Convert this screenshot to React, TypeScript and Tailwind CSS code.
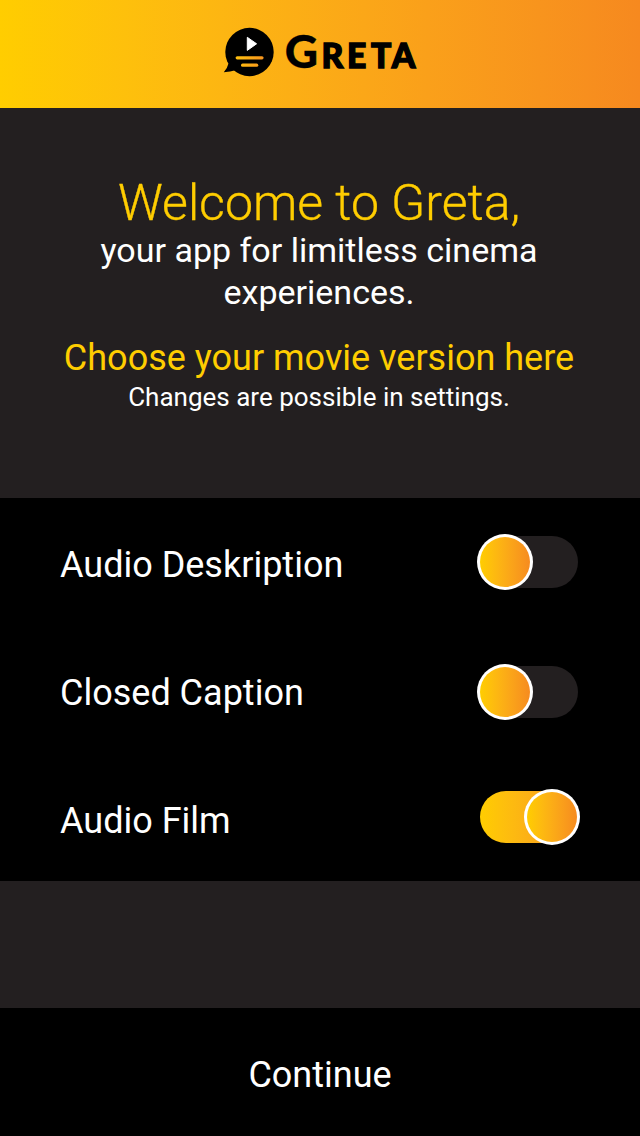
function Logo() {
  return (
    <svg width="200" height="56" viewBox="220 24 200 56" role="img" aria-label="Greta">
      <defs>
        <linearGradient id="bars" x1="235" x2="264" y1="0" y2="0" gradientUnits="userSpaceOnUse">
          <stop offset="0%" stopColor="#ffc20e" />
          <stop offset="100%" stopColor="#f7941e" />
        </linearGradient>
      </defs>
      <circle cx="249.5" cy="52" r="24.2" />
      <path d="M228.5 63.5 Q227.5 68 223.8 72.2 Q230 72 236.5 70 Z" />
      <path d="M247.3 37.3 L256.6 43.8 L247.3 50.4 Z" fill="#fff" stroke="#fff" strokeWidth="1" strokeLinejoin="round" />
      <rect x="235.6" y="56.2" width="28" height="3.2" rx="1.6" fill="url(#bars)" />
      <rect x="241" y="63.6" width="17.3" height="3.2" rx="1.6" fill="url(#bars)" />
      <g className="font-[Lato,sans-serif] font-black" stroke="#000">
        <text x="284.8" y="68" fontSize="46" strokeWidth="0.3">G</text>
        <text x="321.6 347 371 391.8" y="67.5" fontSize="33.6" strokeWidth="1.4">RETA</text>
      </g>
    </svg>
  );
}

function Toggle({ on }: { on?: boolean }) {
  return (
    <div className={on ? "relative w-[98px] h-[52px] rounded-full bg-linear-to-r from-[#ffcd00] to-[#f7931e]" : "relative w-[98px] h-[52px] rounded-full bg-[#231f20]"}>
      <div className={on ? "absolute -top-[2px] -right-[2px] size-[56px] rounded-full bg-white p-[3px]" : "absolute -top-[2px] -left-[3px] size-[56px] rounded-full bg-white p-[3px]"}>
        <div className="size-full rounded-full bg-linear-to-r from-[#ffcd00] to-[#f68b1f]" />
      </div>
    </div>
  );
}

export default function App() {
  return (
    <div className="w-[640px] h-[1136px] flex flex-col bg-[#231f20] text-white font-[Roboto,sans-serif]">
      <header className="h-[108px] flex justify-center pt-6 bg-linear-to-r from-[#ffcd00] to-[#f6891f]">
        <Logo />
      </header>
      <main className="h-[390px] pt-[67px] pr-[2px] text-center">
        <h1 className="text-[50px] leading-[56px] font-light text-[#ffcd00] [-webkit-text-stroke:0.35px_#ffcd00]">Welcome to Greta,</h1>
        <p className="-mt-[2px] text-[34px] leading-[42px]">your app for limitless cinema<br />experiences.</p>
        <h2 className="mt-[23px] text-[36px] leading-[44px] text-[#ffcd00]">Choose your movie version here</h2>
        <p className="text-[26px] leading-[34px]">Changes are possible in settings.</p>
      </main>
      <section className="h-[383px] bg-black pl-[60px] pr-[62px] text-[36px]">
        <div className="h-[128px] flex justify-between items-center">
          <span className="pt-1.5">Audio Deskription</span>
          <Toggle />
        </div>
        <div className="h-[128px] flex justify-between items-center">
          <span className="pt-1.5">Closed Caption</span>
          <div className="pt-1"><Toggle /></div>
        </div>
        <div className="h-[127px] flex justify-between items-center">
          <span className="pt-1.5">Audio Film</span>
          <div className="pb-px"><Toggle on /></div>
        </div>
      </section>
      <div className="h-[127px]" />
      <button className="h-[128px] pt-1.5 bg-black text-[36px]">Continue</button>
    </div>
  );
}
